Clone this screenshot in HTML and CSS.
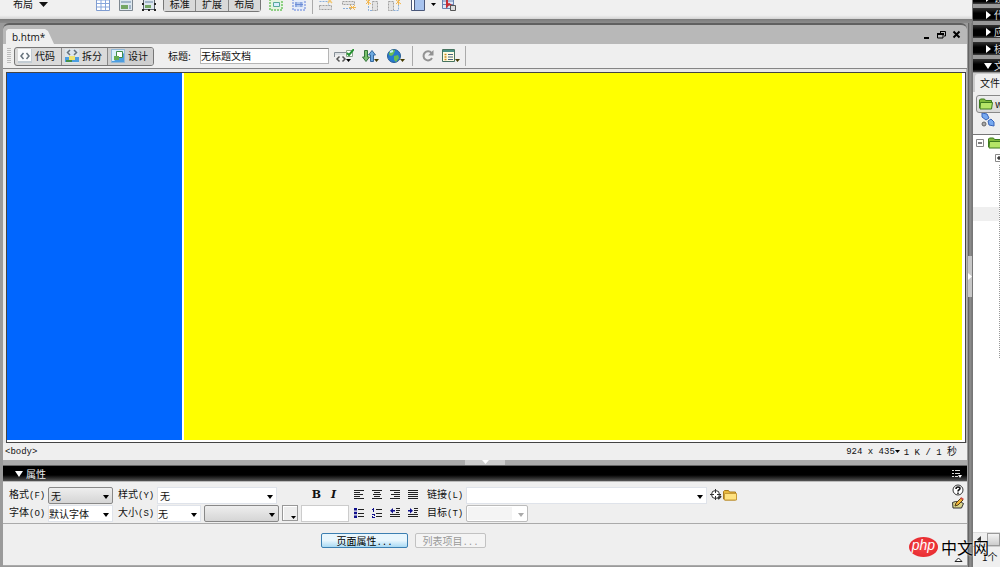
FILE: index.html
```html
<!DOCTYPE html>
<html lang="zh-CN">
<head>
<meta charset="utf-8">
<title>b.htm*</title>
<link rel="stylesheet" href="styles.css">
</head>
<body>
<div class="app">
  <div class="main">
    <header class="insert-bar">
      <div class="insert-strip">
        <button class="category">布局 <svg width="9" height="5" viewBox="0 0 9 5"><path d="M0 0h9L4.500 5z" fill="#111"/></svg></button>
        <svg class="ic" viewBox="0 0 14 14"><path d="M.5.5h13v13H.5z" fill="#fff" stroke="#7f9cd0"/><path d="M1 3h12M1 6.500h12M1 10h12M5 1v12M9.500 1v12" stroke="#86a6dc"/></svg>
        <svg class="ic" viewBox="0 0 14 14"><path d="M.5.5h13v13H.5z" fill="#dde7ef" stroke="#7d8790"/><path d="M2 8h7v4H2z" fill="#74a665"/><path d="M2 5h10M10 9h2M10 11h2" stroke="#6985a5"/></svg>
        <svg class="ic" viewBox="0 0 14 14"><path d="M1.500 1.500h11v11h-11z" fill="#dde7ef" stroke="#59636b"/><path d="M3 8h6v3H3z" fill="#74a665"/><path d="M3 5h8" stroke="#6985a5"/><path d="M0 6h2v2H0zM12 6h2v2h-2zM0 12h2v2H0zM6 12h2v2H6zM12 12h2v2h-2z" fill="#222"/></svg>
        <div class="modes"><button>标准</button><button>扩展</button><button>布局</button></div>
        <svg class="ic" viewBox="0 0 14 14"><path d="M1 1h12v12H1z" fill="#e4f5df" stroke="#8fd084" stroke-width="2" stroke-dasharray="2 1"/><path d="M4.500 5.500h6v4h-6z" fill="#d7ecff" stroke="#58a999"/></svg>
        <svg class="ic" viewBox="0 0 14 14"><path d="M1 1h12v12H1z" fill="#e4ebfa" stroke="#a5b7e8" stroke-width="2" stroke-dasharray="2 1"/><path d="M3 5h8v5H3z" fill="#b3c7ec"/><path d="M4 5v5M9 5v5M3 7.500h8" stroke="#6d8cd5"/></svg>
        <span class="sep"></span>
        <svg class="ic faded" viewBox="0 0 14 14"><path d="M.5 8.500h12v4H.5z" fill="#e0e0e0" stroke="#8d8d8d" stroke-dasharray="2 1"/><path d="M.5 4.500h9v4" fill="none" stroke="#72a0d4" stroke-dasharray="2 1"/><path d="M9 2l4 4M13 1l-4 5" stroke="#f2bd55" stroke-width="1.500"/></svg>
        <svg class="ic faded" viewBox="0 0 14 14"><path d="M.5 4.500h12v3H.5z" fill="#e0e0e0" stroke="#8d8d8d" stroke-dasharray="2 1"/><path d="M1 11.500h8" stroke="#72a0d4" stroke-dasharray="2 1"/><path d="M8 8l5 5M13 8l-5 5M7 10.500h7" stroke="#f2a92a"/></svg>
        <svg class="ic faded" viewBox="0 0 14 14"><path d="M7.500 4.500h5v9h-5z" fill="#e0e0e0" stroke="#8d8d8d" stroke-dasharray="2 1"/><path d="M3.500 6v7.500h4" fill="none" stroke="#72a0d4" stroke-dasharray="2 1"/><path d="M1 3l5 4M6 2L1 7M3.500 1v7" stroke="#f2a92a"/></svg>
        <svg class="ic faded" viewBox="0 0 14 14"><path d="M.5 4.500h5v9h-5z" fill="#e0e0e0" stroke="#8d8d8d" stroke-dasharray="2 1"/><path d="M5.500 13.500h5V7" fill="none" stroke="#72a0d4" stroke-dasharray="2 1"/><path d="M8 3l5 4M13 2L8 7M10.500 1v7" stroke="#f2a92a"/></svg>
        <svg class="ic" viewBox="0 0 14 14"><path d="M.5.500h13v13H.5z" fill="#fff" stroke="#4b587a"/><path d="M4 1h9v12H4z" fill="#a8c3ee"/><path d="M3.500 1v12" stroke="#4b587a"/></svg>
        <svg class="tiny" viewBox="0 0 5 3"><path d="M0 0h5L2.500 3z"/></svg>
        <svg class="ic" viewBox="0 0 14 14"><path d="M.5.500h11v11H.5z" fill="#dce7f8" stroke="#6984b2"/><path d="M1 4h10M1 7.500h10M5 1v10" stroke="#6984b2"/><path d="M5 2v7l2-2 3 2" fill="none" stroke="#c62d33" stroke-width="2"/><path d="M8.500 8.500h5v5h-5z" fill="#ddd" stroke="#555"/></svg>
      </div>
    </header>

    <div class="desk">
      <div class="panels">
        <section class="doc">
          <div class="titlebar">
            <div class="tab"><span>b.htm*</span></div>
            <div class="win-controls">
              <button aria-label="最小化"><svg viewBox="0 0 9 9"><path d="M2 7h5v2H2z"/></svg></button>
              <button aria-label="还原"><svg viewBox="0 0 9 9"><path d="M3 1.500h5.500V6H7M3.500 3V1" fill="none" stroke="#000"/><path d="M.5 4h5.500v4H.5z" fill="none" stroke="#000"/><path d="M0 3h7v2H0z"/></svg></button>
              <button aria-label="关闭"><svg viewBox="0 0 9 9"><path d="M1.500 1.500l6 6M7.500 1.500l-6 6" stroke="#000" stroke-width="2"/></svg></button>
            </div>
          </div>
          <div class="doc-tools">
            <span class="grip"></span>
            <div class="views">
              <button><svg viewBox="0 0 14 14"><path d="M0 0h14v14H0z" fill="#c3ccd3"/><path d="M0 0h13v12H0z" fill="#fafbfc"/><path d="M5.500 4L3 7l2.500 3M8.500 4L11 7l-2.500 3" fill="none" stroke="#66727c" stroke-width="1.500"/></svg>代码</button>
              <button><svg viewBox="0 0 14 14"><path d="M0 0h14v14H0z" fill="#dce5ec"/><path d="M0 8h14v5H0z" fill="#4d9ee0"/><path d="M4 7h6v4H4z" fill="#f0e26d"/><path d="M1 11h6v2H1z" fill="#448f49"/><path d="M5 1L2.500 3.500 5 6M9 1l2.500 2.500L9 6" fill="none" stroke="#66727c" stroke-width="1.500"/></svg>拆分</button>
              <button class="on"><svg viewBox="0 0 14 14"><path d="M.5.500h13v13H.5z" fill="#4d9ee0" stroke="#92b8d8"/><path d="M1 1h12v3L3 12H1z" fill="#d9eefb"/><path d="M5.500 2.500h6v6h-6z" fill="#fff" stroke="#408c4a"/><path d="M3 7h5v4H3z" fill="#64ad52"/></svg>设计</button>
            </div>
            <label class="title-label" for="doc-title">标题:</label>
            <input class="title-input" id="doc-title" value="无标题文档">
            <div class="doc-icons">
              <svg width="20" height="14" viewBox="0 0 20 14"><path d="M.5 8V3.500H12" fill="none" stroke="#868f96"/><path d="M1 5h10" stroke="#cbd2d7"/><path d="M5.500 7.500L3 10l2.500 2.500M8.500 7.500L11 10l-2.500 2.500" fill="none" stroke="#555" stroke-width="1.500"/><path d="M12.500 1.500h6v6h-6z" fill="#fff" stroke="#8ba48b"/><path d="M13 4l2 2 5-6" fill="none" stroke="#279331" stroke-width="2"/><path d="M12 10h5l-2.500 3z"/></svg>
              <svg width="17" height="14" viewBox="0 0 17 14"><path d="M2.500 1.500h3V8H7.500L4 12.500.5 8h2z" fill="#7bc26c" stroke="#34753a"/><path d="M8.500 12.500h3V6h2L10 1.500 6.500 6h2z" fill="#6da9df" stroke="#36699d"/><path d="M12 10h5l-2.500 3z" fill="#443b00"/></svg>
              <svg width="18" height="14" viewBox="0 0 18 14"><circle cx="7" cy="7" r="6.500" fill="#2779ce" stroke="#285e94"/><path d="M2 4c2-4 6-4 6-2L6 6 4 7 2 6zM7 7l4-1 1 3-3 4-2-2z" fill="#69bd53"/><path d="M3 3l3-1" stroke="#c5edff" stroke-width="2"/><path d="M13 10h5l-2.500 3z" fill="#443b00"/></svg>
            </div>
            <span class="sep"></span>
            <div class="doc-icons second">
              <svg width="12" height="14" viewBox="0 0 12 14"><path d="M9.500 4A4.500 4.500 0 1 0 10 9" fill="none" stroke="#929292" stroke-width="2"/><path d="M11.500 1v5.500H6z" fill="#929292"/></svg>
              <svg width="18" height="14" viewBox="0 0 18 14"><path d="M.500.500h12v12H.5z" fill="#fffce2" stroke="#46735f"/><path d="M1 1h11v2H1z" fill="#4a9186"/><path d="M2.500 5.500h2M2.500 8h2M2.500 10.500h2" stroke="#cc8d20" stroke-width="1.500"/><path d="M6 5.500h5M6 8h5M6 10.500h5" stroke="#476582"/><path d="M13 10h5l-2.500 3z" fill="#443b00"/></svg>
            </div>
            <span class="sep"></span>
          </div>
          <div class="canvas"><div class="frame-left"></div><div class="frame-right"></div></div>
          <div class="status">
            <span>&lt;body&gt;</span>
            <span class="sizes">924 x 435 <svg class="tiny" viewBox="0 0 5 3"><path d="M0 0h5L2.500 3z"/></svg></span>
            <span class="speed">1 K / 1 <b>秒</b></span>
          </div>
        </section>

        <div class="split-h"><span><svg width="7" height="4" viewBox="0 0 7 4"><path d="M0 0h7L3.500 4z" fill="#fff"/></svg></span></div>

        <section class="props">
          <div class="props-head">
            <svg width="8" height="6" viewBox="0 0 8 6"><path d="M0 0h8L4 6z" fill="#fff"/></svg>
            <h2>属性</h2>
            <svg class="menu" width="10" height="9" viewBox="0 0 10 9"><path d="M0 1.500h2M3 1.500h5M0 4.500h2M3 4.500h5M0 7.500h2M3 7.500h3" stroke="#ddd"/><path d="M6 6h4L8 9z" fill="#fff"/></svg>
          </div>
          <div class="props-form">
            <div class="rows">
              <div class="row">
                <label for="fmt">格式<i>(F)</i></label>
                <span class="dd w65 raised"><select id="fmt"><option>无</option></select></span>
                <label class="second-label" for="sty">样式<i>(Y)</i></label>
                <span class="dd w120"><select id="sty"><option>无</option></select></span>
                <div class="bi"><button class="bold">B</button><button class="ital">I</button></div>
                <div class="para">
                  <button aria-label="左对齐"><svg viewBox="0 0 10 10"><path d="M0 .5h10M0 2.500h6M0 4.500h9M0 6.500h6M0 8.500h10"/></svg></button>
                  <button aria-label="居中对齐"><svg viewBox="0 0 10 10"><path d="M0 .5h10M2 2.500h6M1 4.500h8M2 6.500h6M0 8.500h10"/></svg></button>
                  <button aria-label="右对齐"><svg viewBox="0 0 10 10"><path d="M0 .5h10M4 2.500h6M1 4.500h9M4 6.500h6M0 8.500h10"/></svg></button>
                  <button aria-label="两端对齐"><svg viewBox="0 0 10 10"><path d="M0 .5h10M0 2.500h10M0 4.500h10M0 6.500h10M0 8.500h10"/></svg></button>
                </div>
                <label for="lnk">链接<i>(L)</i></label>
                <span class="dd w241"><select id="lnk"><option></option></select></span>
                <div class="link-icons">
                  <svg width="12" height="12" viewBox="0 0 12 12"><circle cx="5.500" cy="5.500" r="4" fill="#fff" stroke="#333"/><path d="M5.500 0v4M5.500 7v4M0 5.500h4M7 5.500h4" stroke="#333"/><path d="M8 10l3-3" stroke="#333" stroke-width="2"/></svg>
                  <svg width="14" height="12" viewBox="0 0 14 12"><path d="M.5 10V2.500l1-1h4l1 1.500h6v8H2z" fill="#e9b93d" stroke="#a87a1e"/><path d="M1.500 4.500h12v6.500h-12z" fill="#ffe27f" stroke="#c79a36"/></svg>
                </div>
              </div>
              <div class="row">
                <label for="fnt">字体<i>(O)</i></label>
                <span class="dd w65 tight"><select id="fnt"><option>默认字体</option></select></span>
                <label class="second-label" for="siz">大小<i>(S)</i></label>
                <span class="dd w44 tight"><select id="siz"><option>无</option></select></span>
                <span class="dd w75 raised"><select aria-label="单位"><option></option></select></span>
                <button class="swatch" aria-label="文本颜色"><svg class="tiny" viewBox="0 0 5 3"><path d="M0 0h5L2.500 3z"/></svg></button>
                <input class="color" aria-label="颜色值">
                <div class="para lists">
                  <button aria-label="项目列表"><svg viewBox="0 0 10 10"><path d="M4 1.500h6M4 5.500h6M4 8.500h6"/><path class="bl" d="M0 0h3v2.500H0zM0 3.800h3v2.500H0zM0 7.500h3V10H0z"/></svg></button>
                  <button aria-label="编号列表"><svg viewBox="0 0 10 10"><path d="M4 1.500h6M4 5.500h6M4 8.500h6"/><path class="bl" d="M1 0h1v4H1zM0 1h1v1H0zM0 6h3v2H1v1h2v1H0V8h2V7H0z"/></svg></button>
                  <button aria-label="文本凸出"><svg viewBox="0 0 10 10"><path d="M6 .5h4M6 2.500h4M6 4.500h3M0 6.500h10M0 8.500h10"/><path class="bl" d="M3 0v2h2v1.500H3v2L0 2.800z"/></svg></button>
                  <button aria-label="文本缩进"><svg viewBox="0 0 10 10"><path d="M6 .5h4M6 2.500h4M6 4.500h3M0 6.500h10M0 8.500h10"/><path class="bl" d="M2 0v2H0v1.500h2v2l3-2.700z"/></svg></button>
                </div>
                <label for="tgt">目标<i>(T)</i></label>
                <span class="dd w62 off"><select id="tgt" disabled><option></option></select></span>
              </div>
            </div>
            <div class="help">
              <button aria-label="帮助"><svg viewBox="0 0 12 12"><circle cx="6" cy="6" r="5" fill="#fff" stroke="#333"/><path d="M4 5c0-3 4-2.500 4-.5C8 6 6 5.500 6 7.500M6 8.500V10" fill="none" stroke="#111" stroke-width="1.500"/></svg></button>
              <button aria-label="快速标签编辑器"><svg viewBox="0 0 12 12"><path d="M.5 5.500l3-1 6 1 2 1-2 4.500H1z" fill="#d9d48a" stroke="#333"/><path d="M3 9l1-3 5-5 2 2-5 5z" fill="#efb337" stroke="#553f16"/><path d="M9 0l3 2-1 1-3-1z" fill="#cf4d41"/></svg></button>
            </div>
          </div>
          <div class="props-more">
            <button class="primary">页面属性<i>...</i></button>
            <button disabled>列表项目<i>...</i></button>
            <svg class="expander" width="9" height="5" viewBox="0 0 9 5"><path d="M1 4.500L4.500 1 8 4.500z" fill="#fff" stroke="#222"/></svg>
          </div>
        </section>
      </div>
      <div class="split-v"><span><svg width="4" height="7" viewBox="0 0 4 7"><path d="M0 0v7l4-3.500z" fill="#fff"/></svg></span></div>
    </div>
  </div>

  <aside class="side">
    <div class="stack">
      <div class="group"><svg viewBox="0 0 8 8"><path d="M2 0v8l5-4z"/></svg>设计</div>
      <div class="group"><svg viewBox="0 0 8 8"><path d="M2 0v8l5-4z"/></svg>代码</div>
      <div class="group"><svg viewBox="0 0 8 8"><path d="M2 0v8l5-4z"/></svg>应用</div>
      <div class="group"><svg viewBox="0 0 8 8"><path d="M2 0v8l5-4z"/></svg>标签</div>
      <div class="group"><svg viewBox="0 0 8 8"><path d="M0 1h8L4 7z"/></svg>文件</div>
    </div>
    <div class="files-tab"><span>文件</span></div>
    <div class="files-tools">
      <button class="site"><svg width="14" height="12" viewBox="0 0 14 12"><path d="M.5 10V2l1-1h4l1 1.500h6V5" fill="#7fba3a" stroke="#3d7a1e"/><path d="M1.500 4.500h12l-1 6.500H1z" fill="#b5e567" stroke="#3d7a1e"/></svg>w</button>
      <svg class="connect" width="14" height="14" viewBox="0 0 14 14"><path d="M1 0l5 1 2 4-3 2-4-3zM13 13l-5-1-1-4 3-2 3 3z" fill="#78aaf0" stroke="#3764bb"/><circle cx="3" cy="11" r="2" fill="#aaa" stroke="#666"/></svg>
    </div>
    <div class="tree">
      <div class="node"><svg width="8" height="8" viewBox="0 0 8 8"><path d="M.5.500h7v7h-7z" fill="#fff" stroke="#888"/><path d="M2 4h4" stroke="#000"/></svg><svg width="14" height="12" viewBox="0 0 14 12"><path d="M.5 10V2l1-1h4l1 1.500h6V5" fill="#7fba3a" stroke="#3d7a1e"/><path d="M1.500 4.500h12l-1 6.500H1z" fill="#b5e567" stroke="#3d7a1e"/></svg></div>
      <div class="node child"><svg width="8" height="8" viewBox="0 0 8 8"><path d="M.5.500h7v7h-7z" fill="#fff" stroke="#888"/><path d="M2 4h4M4 2v4" stroke="#000"/></svg></div>
      <div class="branch"><div class="picked"></div></div>
    </div>
    <div class="scroll"><svg width="4" height="7" viewBox="0 0 4 7"><path d="M4 0v7L0 3.500z" fill="#333"/></svg><span></span></div>
    <div class="side-status">1个</div>
  </aside>

  <div class="mark"><span class="php">php</span><span class="cn">中文网</span></div>
</div>
</body>
</html>
```

FILE: styles.css
```css
* { box-sizing: border-box; }
body { margin: 0; font: 10px/14px "Noto Sans CJK SC", sans-serif; color: #111; }
button, input, select { font: inherit; color: inherit; margin: 0; padding: 0; border: 0; background: none; border-radius: 0; }
svg { display: block; flex: none; }
i { font: 9px/14px "Liberation Mono", monospace; }

.app { position: relative; display: grid; grid-template-columns: 1fr 28px; height: 100vh; overflow: hidden; background: #efefef; }
.main { display: flex; flex-direction: column; min-width: 0; min-height: 0; }

.insert-bar { height: 19px; flex: none; overflow: hidden; background: linear-gradient(#f0f0f0 80%, #d4d4d4); }
.insert-strip { display: flex; align-items: center; gap: 9px; height: 16px; margin-top: -4px; padding-left: 13px; }
.category { display: flex; align-items: center; gap: 6px; width: 74px; }
.ic { width: 14px; height: 14px; }
.faded { opacity: .8; }
.tiny { width: 5px; height: 3px; }
.insert-strip .tiny { margin: 0 -3px; }
.modes { display: flex; width: 98px; height: 16px; border: 1px solid #777; border-radius: 3px; margin: 0 -1px 0 -2px; }
.modes button { flex: 1; background: #d9d9d9; }
.modes button + button { border-left: 1px solid #888; }
.sep { width: 1px; height: 20px; background: #aaa; flex: none; }
.insert-strip .sep { margin: 0 -3px; }

.desk { flex: 1; display: flex; min-height: 0; padding-top: 4px; background: linear-gradient(#7c7c7c, #8c8c8c 4px); }
.panels { flex: 1; display: flex; flex-direction: column; min-width: 0; padding: 0 1px 1px 3px; background: #9a9a9a; }
.doc { flex: 1; display: flex; flex-direction: column; min-height: 0; border-top: 2px solid #606060; border-radius: 6px 6px 0 0; background: #b8b8b8; }
.titlebar { display: flex; justify-content: space-between; align-items: flex-end; height: 19px; flex: none; padding: 0 6px 0 3px; }
.tab { width: 48px; height: 15px; padding-left: 6px; background: #efefef; clip-path: polygon(0 2px, 2px 0, 39px 0, 42px 2px, 48px 100%, 0 100%); font: 10px/16px "Open Sans", sans-serif; }
.win-controls { display: flex; gap: 6px; padding-bottom: 5px; }
.win-controls svg { width: 9px; height: 9px; }

.doc-tools { display: flex; align-items: center; height: 25px; flex: none; padding-left: 4px; background: #efefef; border-bottom: 1px solid #858585; }
.grip { width: 4px; height: 16px; margin-right: 3px; background: repeating-linear-gradient(#bbb 0 1px, #efefef 1px 2px); }
.views { display: flex; height: 19px; border: 1px solid #777; border-radius: 3px; background: #dadada; overflow: hidden; }
.views button { display: flex; align-items: center; gap: 3px; width: 46px; padding-left: 3px; }
.views button + button { border-left: 1px solid #888; }
.views .on { background: #cfcfcf; }
.views svg { width: 14px; height: 14px; }
.title-label { width: 32px; margin-left: 14px; }
.title-input { width: 129px; height: 16px; padding-bottom: 2px; border: 1px solid #b5b5b5; border-top-color: #888; background: #fff; }
.doc-icons { display: flex; gap: 8px; margin: 0 7px 0 5px; }
.doc-icons.second { margin: 0 5px 0 9px; }

.canvas { flex: 1; display: flex; gap: 2px; min-height: 0; background: #fff; border: solid #444; border-width: 1px; margin: 3px 1px 0 3px; padding: 0 3px 2px 0; box-shadow: 0 -3px #e8e8e8, -3px 0 #e8e8e8, -3px -3px #e8e8e8; }
.frame-left { width: 175px; background: #0066ff; }
.frame-right { flex: 1; background: #ffff00; }

.status { display: flex; align-items: center; height: 17px; flex: none; padding: 0 10px 0 2px; background: #efefef; font: 9px/14px "Liberation Mono", monospace; }
.sizes { display: flex; align-items: center; margin-left: auto; }
.speed { padding-left: 4px; }
.speed b { font: 10px/14px "Noto Sans CJK SC", sans-serif; }

.split-h { display: flex; justify-content: center; height: 5px; flex: none; background: #aaa; }
.split-h span { display: flex; justify-content: center; width: 40px; background: #ccc; }
.split-v { width: 4px; flex: none; display: flex; align-items: center; padding-bottom: 38px; background: linear-gradient(90deg, #555, #929292 50%, #777); }
.split-v span { display: flex; align-items: center; width: 4px; height: 41px; background: #c8c8c8; }

.props { flex: none; background: #efefef; border-top: 1px solid #666; }
.props-head { display: flex; align-items: center; height: 15px; padding: 0 5px 0 12px; background: linear-gradient(#000 60%, #555); color: #eee; }
.props-head h2 { margin: 0 0 0 3px; font: 10px/14px "Noto Sans CJK SC", sans-serif; }
.props-head .menu { margin-left: auto; }
.props-form { display: flex; justify-content: space-between; padding: 4px 3px 1px 6px; border-bottom: 1px solid #aaa; border-top: 1px solid #bbb; }
.row { display: flex; align-items: center; height: 18px; }
.row label { width: 39px; white-space: nowrap; }
.row .second-label { margin-left: 5px; }
.dd { position: relative; height: 17px; background: #fff; border: 1px solid #dfe3ea; }
.dd::after { content: ""; position: absolute; right: 3px; top: 7px; border: solid transparent; border-width: 4px 3px 0; border-top-color: #000; pointer-events: none; }
.dd select { display: block; width: 100%; height: 15px; padding-left: 2px; line-height: 15px; appearance: none; }
.raised { border: 1px solid #888; border-radius: 2px; background: linear-gradient(#eee, #d5d5d5); }
.off { border: 1px solid #bbb; border-radius: 2px; background: #fff; }
.off select { width: 44px; height: 13px; margin: 1px; background: #efefef; }
.off::after { border-top-color: #aaa; }
.w44 { width: 44px; }
.w62 { width: 62px; }
.w65 { width: 65px; }
.dd.tight select { padding: 0 0 2px; }
.w75 { width: 75px; margin: 0 3px; }
.w120 { width: 120px; }
.w241 { width: 241px; }
.bi { display: flex; gap: 6px; margin: 0 14px 0 34px; }
.bi button { width: 11px; font: bold 11px/14px "DejaVu Serif", serif; }
.bi .ital { font-style: italic; }
.para { display: flex; gap: 8px; margin: 0 9px 0 1px; }
.lists { margin-left: 5px; }
.para button { width: 10px; }
.para svg { width: 10px; height: 10px; stroke: #222; }
.para .bl { fill: #10108c; stroke: none; }
.swatch { display: flex; align-items: flex-end; justify-content: flex-end; width: 16px; height: 16px; padding: 1px; border: 1px solid #999; background: #eee; box-shadow: inset 1px 1px #fff; }
.color { width: 48px; height: 17px; margin-left: 3px; border: 1px solid #ccc; background: #fff; }
.link-icons { display: flex; gap: 1px; margin-left: 3px; }
.help { display: flex; flex-direction: column; gap: 1px; margin-top: -2px; }
.help svg { width: 12px; height: 12px; }
.props-more { display: flex; align-items: flex-start; gap: 7px; height: 42px; padding: 9px 4px 0 318px; border-bottom: 1px solid #aaa; }
.props-more button { height: 15px; width: 71px; border: 1px solid #c2c2c2; border-radius: 2px; line-height: 13px; color: #999; background: #f4f4f4; }
.props-more .primary { width: 87px; border-color: #3c7fb1; color: #000; background: linear-gradient(#e8f6fd 50%, #a9daf4); }
.expander { align-self: flex-end; margin: 0 0 3px auto; }

.side { display: flex; flex-direction: column; min-height: 0; overflow: hidden; white-space: nowrap; background: #efefef; border-left: 1px solid #777; }
.stack { height: 73px; flex: none; display: flex; flex-direction: column; justify-content: flex-end; overflow: hidden; background: #888; }
.group { display: flex; align-items: center; gap: 2px; height: 17px; flex: none; padding-left: 11px; color: #ddd; background: linear-gradient(#333, #000 40%, #000 80%, #444); border: solid #999; border-width: 3px 0 1px; }
.group svg { width: 8px; height: 8px; fill: #fff; }
.files-tab { height: 19px; flex: none; padding: 1px 0 0 2px; background: #ccc; }
.files-tab span { display: block; height: 18px; padding-left: 5px; line-height: 18px; background: #efefef; border-radius: 3px 0 0 0; }
.files-tools { height: 43px; flex: none; padding: 3px 0 0 3px; border-bottom: 1px solid #777; }
.site { display: flex; align-items: center; gap: 2px; width: 40px; height: 18px; padding-left: 2px; border: 1px solid #888; border-radius: 3px; background: linear-gradient(#eee, #d8d8d8); }
.connect { margin: 0 0 0 5px; }
.tree { flex: 1; min-height: 0; background: #fff; }
.node { display: flex; align-items: center; gap: 4px; height: 15px; padding-left: 3px; }
.child { padding-left: 22px; }
.branch { height: 193px; padding-top: 42px; border-right: 1px dotted #999; }
.picked { height: 14px; background: #efefef; }
.scroll { display: flex; align-items: center; gap: 6px; height: 14px; flex: none; padding-left: 4px; border-top: 1px solid #ddd; }
.scroll span { width: 30px; height: 13px; border: 1px solid #999; background: linear-gradient(#f4f4f4, #ccc); }
.side-status { height: 21px; flex: none; padding: 3px 0 0 9px; border-top: 1px solid #ccc; }

.mark { position: absolute; right: 11px; bottom: 9px; display: flex; align-items: center; gap: 3px; }
.php { width: 29px; height: 20px; border-radius: 50%; background: radial-gradient(#f5484b, #e32026); color: #fff; font: italic 14px/17px "Liberation Sans", sans-serif; text-align: center; }
.cn { font-size: 16px; line-height: 22px; color: #000; text-shadow: 0 0 2px #fff; }
```
